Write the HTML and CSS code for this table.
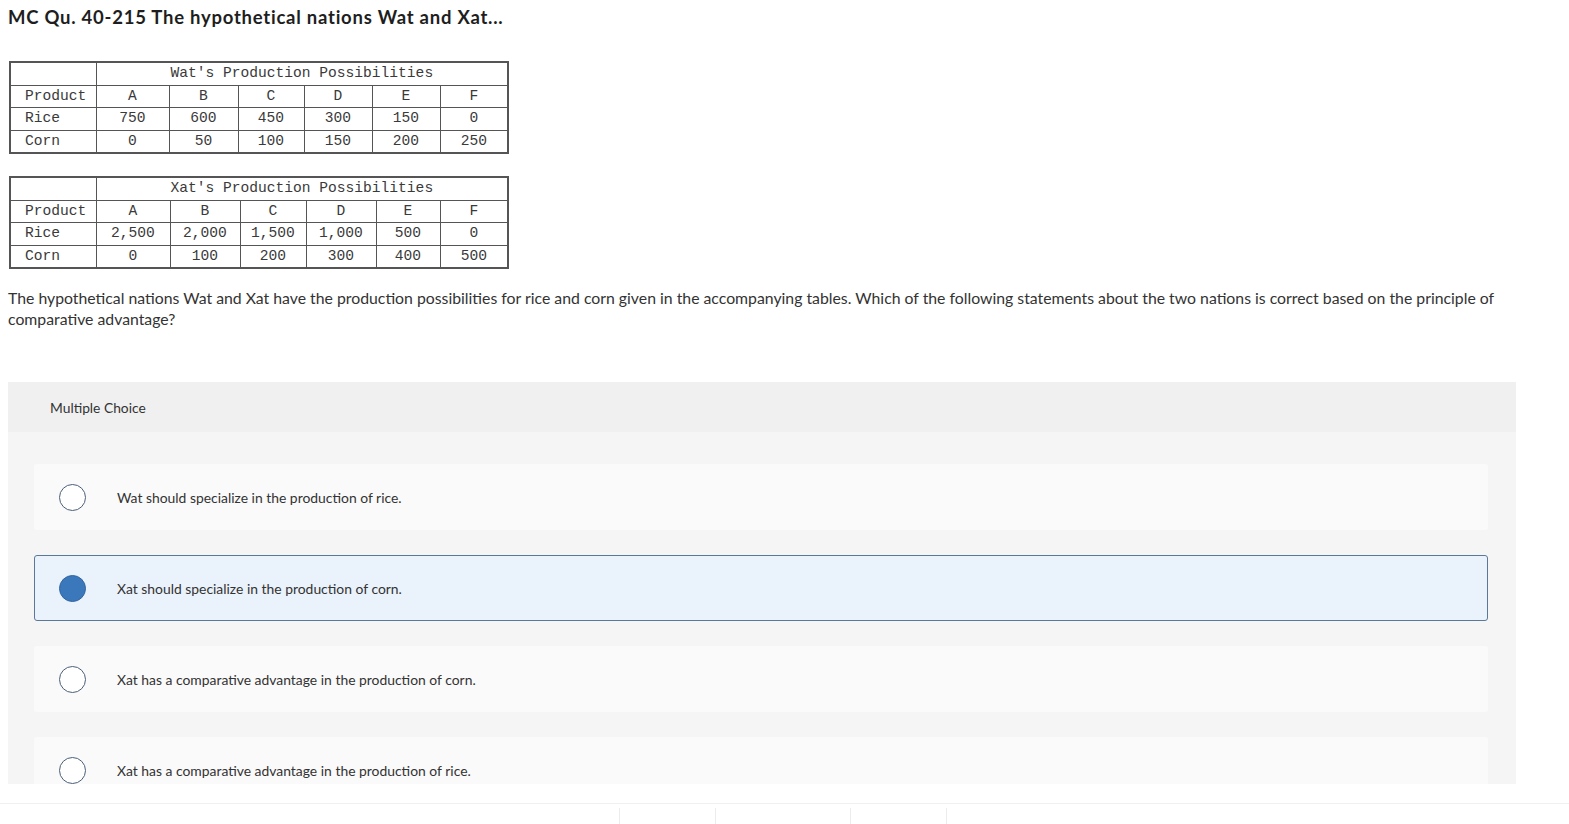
FILE: index.html
```html
<!DOCTYPE html>
<html>
<head>
<meta charset="utf-8">
<link rel="stylesheet" href="styles.css">
</head>
<body>
<div class="page">
  <h1 class="title">MC Qu. 40-215 The hypothetical nations Wat and Xat...</h1>

  <table class="pp pp-wat">
    <colgroup>
      <col class="c0"><col class="c1"><col class="c2"><col class="c3"><col class="c4"><col class="c5"><col class="c6">
    </colgroup>
    <tr><td></td><td colspan="6" class="cap">Wat's Production Possibilities</td></tr>
    <tr><td class="lbl">Product</td><td>A</td><td>B</td><td>C</td><td>D</td><td>E</td><td>F</td></tr>
    <tr><td class="lbl">Rice</td><td>750</td><td>600</td><td>450</td><td>300</td><td>150</td><td>0</td></tr>
    <tr><td class="lbl">Corn</td><td>0</td><td>50</td><td>100</td><td>150</td><td>200</td><td>250</td></tr>
  </table>

  <table class="pp pp-xat">
    <colgroup>
      <col class="c0"><col class="c1"><col class="c2"><col class="c3"><col class="c4"><col class="c5"><col class="c6">
    </colgroup>
    <tr><td></td><td colspan="6" class="cap">Xat's Production Possibilities</td></tr>
    <tr><td class="lbl">Product</td><td>A</td><td>B</td><td>C</td><td>D</td><td>E</td><td>F</td></tr>
    <tr><td class="lbl">Rice</td><td>2,500</td><td>2,000</td><td>1,500</td><td>1,000</td><td>500</td><td>0</td></tr>
    <tr><td class="lbl">Corn</td><td>0</td><td>100</td><td>200</td><td>300</td><td>400</td><td>500</td></tr>
  </table>

  <p class="question">The hypothetical nations Wat and Xat have the production possibilities for rice and corn given in the accompanying tables. Which of the following statements about the two nations is correct based on the principle of comparative advantage?</p>

  <section class="mc">
    <div class="mc-head">Multiple Choice</div>
    <div class="mc-body">
      <div class="opt"><span class="radio"></span><span class="opt-text">Wat should specialize in the production of rice.</span></div>
      <div class="opt selected"><span class="radio"></span><span class="opt-text">Xat should specialize in the production of corn.</span></div>
      <div class="opt"><span class="radio"></span><span class="opt-text">Xat has a comparative advantage in the production of corn.</span></div>
      <div class="opt"><span class="radio"></span><span class="opt-text">Xat has a comparative advantage in the production of rice.</span></div>
    </div>
  </section>
</div>
<footer class="footer">
  <span class="fsep s1"></span><span class="fsep s2"></span><span class="fsep s3"></span><span class="fsep s4"></span>
</footer>
</body>
</html>
```

FILE: styles.css
```css
html, body {
  margin: 0;
  padding: 0;
  background: #fff;
}
body {
  width: 1569px;
  height: 824px;
  overflow: hidden;
  font-family: Lato, "Open Sans", Arial, sans-serif;
  color: #333;
}
.page {
  padding: 0 8px;
  height: 803px;
  overflow: hidden;
}
.title {
  margin: 0;
  padding-top: 6px;
  font-size: 18.5px;
  line-height: 22px;
  font-weight: 700;
  color: #1e1e1e;
  letter-spacing: 0.75px;
}
.pp {
  border-collapse: collapse;
  table-layout: fixed;
  width: 498px;
  margin-left: 1px;
  border: 2px solid #555;
  font-family: "Liberation Mono", "DejaVu Sans Mono", monospace;
  font-size: 14.6px;
  color: #3a3a3a;
}
.pp-wat { margin-top: 33px; }
.pp-xat { margin-top: 22px; }
.pp td {
  border: 1px solid #555;
  height: 21.5px;
  padding: 0;
  text-align: center;
  line-height: 21.5px;
  white-space: nowrap;
}
.pp td.lbl {
  text-align: left;
  padding-left: 14px;
}
.pp-wat .c0 { width: 86px; }
.pp-wat .c1 { width: 73px; }
.pp-wat .c2 { width: 69px; }
.pp-wat .c3 { width: 66px; }
.pp-wat .c4 { width: 68px; }
.pp-wat .c5 { width: 68px; }
.pp-wat .c6 { width: 68px; }
.pp-xat .c0 { width: 86px; }
.pp-xat .c1 { width: 74px; }
.pp-xat .c2 { width: 70px; }
.pp-xat .c3 { width: 66px; }
.pp-xat .c4 { width: 70px; }
.pp-xat .c5 { width: 64px; }
.pp-xat .c6 { width: 68px; }

.question {
  margin: 18px 0 0 0;
  font-size: 15.8px;
  line-height: 21px;
  color: #333;
  padding-right: 40px;
}
.mc {
  margin-top: 53px;
  width: 1508px;
  height: 402px;
  overflow: hidden;
  background: #f5f5f5;
}
.mc-head {
  height: 50px;
  background: #f0f0f0;
  display: flex;
  align-items: center;
  padding-left: 42px;
  font-size: 13.8px;
  color: #333;
}
.mc-body {
  padding: 32px 28px 0 26px;
  display: flex;
  flex-direction: column;
  gap: 25px;
}
.opt {
  height: 64px;
  border: 1px solid transparent;
  border-radius: 3px;
  background: #fafafa;
  display: flex;
  align-items: center;
}
.opt.selected {
  background: #eaf2fb;
  border-color: #5a7998;
}
.radio {
  box-sizing: border-box;
  width: 27px;
  height: 27px;
  border-radius: 50%;
  border: 1.5px solid #4a5f78;
  background: #fff;
  margin-left: 24px;
  flex: none;
}
.selected .radio {
  background: #3a77bb;
  border-color: #33659f;
}
.opt-text {
  margin-left: 31px;
  font-size: 13.9px;
  color: #333;
}
.footer {
  position: relative;
  height: 20px;
  border-top: 1px solid #f0f0f0;
}
.fsep {
  position: absolute;
  top: 4px;
  width: 1px;
  height: 16px;
  background: #ececec;
}
.s1 { left: 619px; }
.s2 { left: 715px; }
.s3 { left: 850px; }
.s4 { left: 946px; }
```
